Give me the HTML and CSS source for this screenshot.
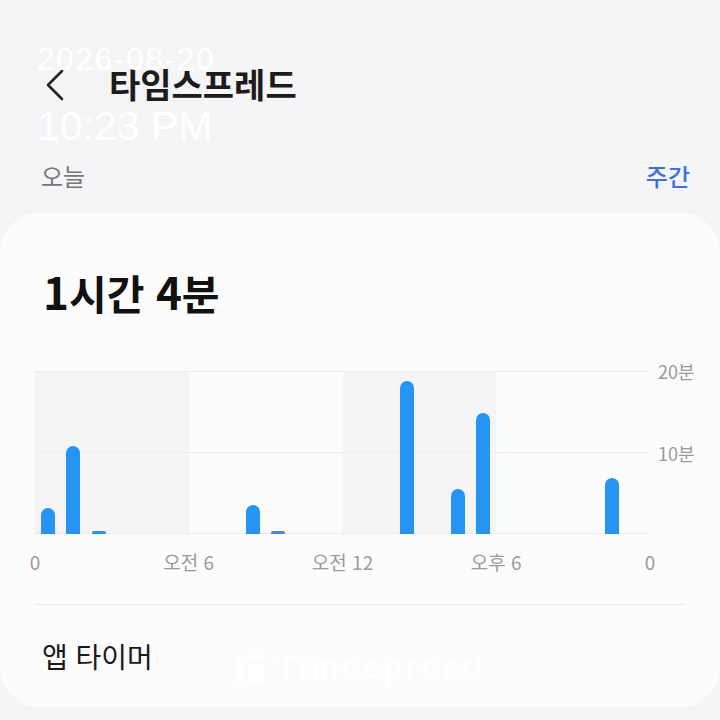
FILE: index.html
```html
<!DOCTYPE html>
<html lang="ko">
<head>
<meta charset="utf-8">
<link rel="stylesheet" href="styles.css">
</head>
<body>
<div class="status">
  <div class="status-date">2026-08-20</div>
  <div class="status-time">10:23 PM</div>
</div>
<header class="topbar">
  <svg class="back" width="20" height="32" viewBox="0 0 20 32"><polyline points="17,2 3,16 17,30" fill="none" stroke="#222" stroke-width="2.6" stroke-linecap="round" stroke-linejoin="round"/></svg>
  <h1 class="title">타임스프레드</h1>
</header>
<div class="tabs">
  <span class="tab-today">오늘</span>
  <span class="tab-week">주간</span>
</div>
<main class="card">
  <div class="total"><span class="num">1</span>시간 <span class="num">4</span>분</div>
  <div class="chart">
    <div class="plot">
      <div class="cell"><div class="bar" style="height:26px"></div></div>
      <div class="cell"><div class="bar" style="height:88px"></div></div>
      <div class="cell"><div class="bar tiny" style="height:3px"></div></div>
      <div class="cell"></div>
      <div class="cell"></div>
      <div class="cell"></div>
      <div class="cell"></div>
      <div class="cell"></div>
      <div class="cell"><div class="bar" style="height:29px"></div></div>
      <div class="cell"><div class="bar tiny" style="height:3px"></div></div>
      <div class="cell"></div>
      <div class="cell"></div>
      <div class="cell"></div>
      <div class="cell"></div>
      <div class="cell"><div class="bar" style="height:153px"></div></div>
      <div class="cell"></div>
      <div class="cell"><div class="bar" style="height:45px"></div></div>
      <div class="cell"><div class="bar" style="height:121px"></div></div>
      <div class="cell"></div>
      <div class="cell"></div>
      <div class="cell"></div>
      <div class="cell"></div>
      <div class="cell"><div class="bar" style="height:56px"></div></div>
      <div class="cell"></div>
    </div>
    <div class="yaxis">
      <span>20분</span>
      <span>10분</span>
      <span></span>
    </div>
    <div class="xaxis">
      <div class="xlabel"><span>0</span></div>
      <div class="xlabel"><span>오전 6</span></div>
      <div class="xlabel"><span>오전 12</span></div>
      <div class="xlabel"><span>오후 6</span></div>
      <div class="xlabel"><span>0</span></div>
    </div>
  </div>
  <div class="divider"></div>
  <div class="timer">앱 타이머</div>
  <div class="watermark">
    <svg width="28" height="27" viewBox="0 0 28 27"><rect x="0" y="0" width="8" height="6" fill="#fff"/><rect x="0" y="9" width="8" height="18" fill="#fff"/><rect x="11" y="0" width="17" height="6" fill="#fff"/><rect x="11" y="9" width="17" height="18" fill="#fff"/></svg>
    <span>Timespread</span>
  </div>
</main>
</body>
</html>
```

FILE: styles.css
```css
* { box-sizing: border-box; }
html, body { margin: 0; padding: 0; }
body {
  width: 720px;
  height: 720px;
  overflow: hidden;
  background: #f5f5f7;
  font-family: "Noto Sans CJK KR", "Noto Sans", sans-serif;
  color: #1a1a1a;
  position: relative;
  padding-top: 61px;
}
.status {
  position: absolute;
  top: 44px;
  left: 37px;
  color: #fff;
  font-family: "Liberation Sans", Arial, sans-serif;
  z-index: 2;
}
.status-date { font-size: 31px; line-height: 31px; letter-spacing: 2px; }
.status-time { font-size: 41px; line-height: 41px; margin-top: 31px; }
.topbar {
  display: flex;
  align-items: center;
  height: 45px;
  padding-left: 45px;
}
.back { display: block; margin-top: 2px; }
.title {
  margin: 0 0 0 44px;
  font-size: 34px;
  line-height: 45px;
  font-weight: 700;
  color: #1c1c1c;
}
.tabs {
  display: flex;
  justify-content: space-between;
  margin-top: 53px;
  padding: 0 30px 0 41px;
  font-size: 24px;
  line-height: 34px;
}
.tab-today { color: #777; }
.tab-week { color: #3d72d8; font-weight: 500; }
.card {
  position: relative;
  margin-top: 20px;
  background: #fcfcfc;
  border-radius: 40px;
  padding: 53px 35px 33px;
}
.total {
  font-size: 41px;
  line-height: 50px;
  font-weight: 700;
  padding-left: 8px;
  color: #111;
}
.total .num { font-size: 44px; }
.chart {
  margin-top: 54px;
  display: grid;
  grid-template-columns: 615px 1fr;
  column-gap: 8px;
}
.plot {
  height: 163px;
  display: grid;
  grid-template-columns: repeat(24, 1fr);
  align-items: end;
  background:
    linear-gradient(#ececec, #ececec) top / 100% 1px no-repeat,
    linear-gradient(#ececec, #ececec) center / 100% 1px no-repeat,
    linear-gradient(#ececec, #ececec) bottom / 100% 1px no-repeat,
    linear-gradient(to right, #f5f5f5 0 25%, transparent 25% 50%, #f5f5f5 50% 75%, transparent 75% 100%);
}
.cell {
  height: 100%;
  display: flex;
  justify-content: center;
  align-items: flex-end;
}
.bar {
  width: 14px;
  background: #2594f2;
  border-radius: 7px 7px 0 0;
}
.bar.tiny { border-radius: 2px 2px 0 0; }
.yaxis {
  height: 183px;
  margin: -10px 0;
  display: flex;
  flex-direction: column;
  justify-content: space-between;
  font-size: 18px;
  line-height: 20px;
  color: #9b9b9b;
  white-space: nowrap;
}
.yaxis span { height: 20px; }
.xaxis {
  grid-column: 1;
  margin-top: 18px;
  display: flex;
  justify-content: space-between;
  font-size: 19px;
  line-height: 20px;
  color: #9b9b9b;
}
.xlabel {
  width: 0;
  display: flex;
  justify-content: center;
  white-space: nowrap;
}
.divider {
  margin-top: 32px;
  border-top: 1px solid #ececec;
}
.timer {
  margin-top: 33px;
  padding-left: 7px;
  font-size: 28px;
  line-height: 36px;
  color: #1a1a1a;
}
.watermark {
  position: absolute;
  left: 236px;
  top: 440px;
  display: flex;
  align-items: center;
  gap: 13px;
  color: #fff;
  font-family: "Liberation Sans", Arial, sans-serif;
  font-weight: 700;
  font-size: 31px;
  letter-spacing: 3.5px;
  line-height: 30px;
}
.watermark svg { display: block; }
```
